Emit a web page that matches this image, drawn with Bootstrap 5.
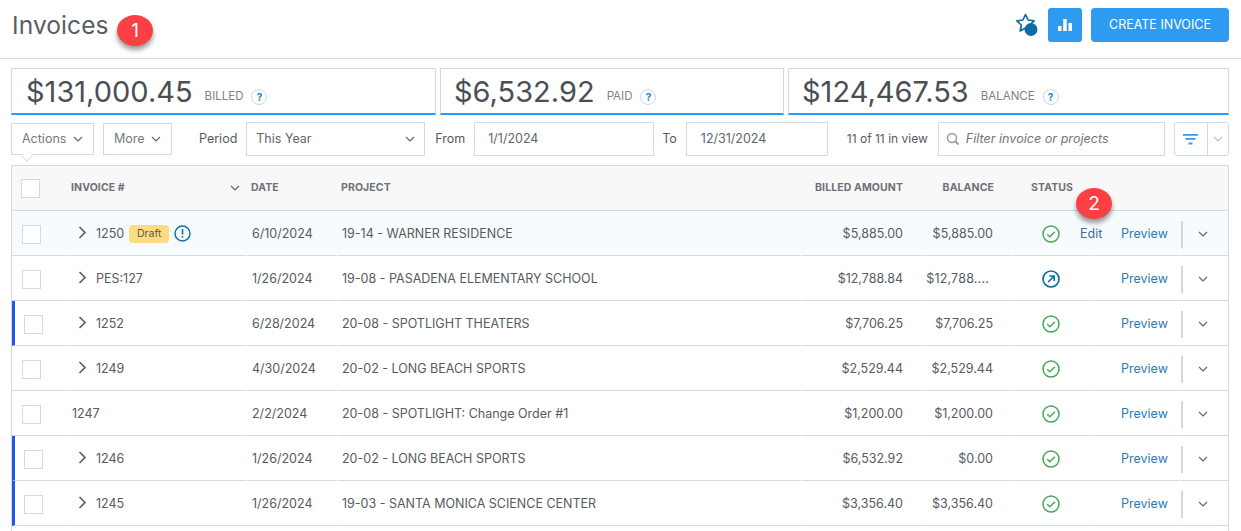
<!DOCTYPE html>
<html lang="en"><head><meta charset="utf-8"><title>Invoices</title>
<link href="https://cdn.jsdelivr.net/npm/bootstrap@5.3.0/dist/css/bootstrap.min.css" rel="stylesheet">
<style>
html,body{height:531px;overflow:hidden}
body{font-family:Inter,"Liberation Sans",sans-serif;color:#555b61;background:#fff;font-size:13px;position:relative}
.page-head{height:59px;border-bottom:1px solid #d3dae4;padding:0 12px}
.page-title{font-size:24.5px;font-weight:400;color:#585e66;margin:0;line-height:30px;padding-top:10px;letter-spacing:.1px}
.head-tools{margin-top:-9px}
.star-ic{margin-right:10px}
.icon-btn{width:34px;height:34px;background:#2e9bf0;border:0;border-radius:3px;padding:0}
.create-btn{width:138px;height:34px;background:#2e9bf0;border:0;border-radius:4px;color:#fff;font-size:12.5px;padding:1px 0 0;margin-left:9px}
.stats{padding:9px 12px 0 11px;gap:4px}
.stat{height:47px;border:1px solid #d3dae4;border-bottom:2px solid #2e9bf0;padding:0 0 0 13px}
.stat-a{width:425px;padding-left:14px}.stat-b{width:344px}.stat-c{width:441px}
.stat-num{font-size:29px;color:#4a4f55;line-height:46px}
.stat-lab{font-size:11.5px;color:#7d8288;margin-left:12px;margin-top:11px}
.qmark{width:16px;height:16px;border:1px solid #cfd8e2;border-radius:50%;color:#1f7fc2;font-size:10px;font-weight:700;margin-left:8px;margin-top:11px;line-height:14px;text-align:center}
.tools{padding:7px 12px 0 11px;height:41px}
.tbtn{height:32px;margin-top:1px;border:1px solid #d3dae4;background:#fff;color:#737a82;font-size:12.5px;padding:0 10px;position:relative}
.tbtn-a{width:83px}.tbtn-m{width:69px;margin-left:9px}
.tbtn-a::after{content:"";position:absolute;left:10px;bottom:-7px;width:10px;height:10px;background:#fff;border-right:1px solid #d3dae4;border-bottom:1px solid #d3dae4;transform:rotate(45deg) scale(.8,.8)}
.lbl{font-size:12.5px;color:#555b61;line-height:33px}
.lbl-p{margin-left:27px}.lbl-f{margin-left:10px}.lbl-t{margin-left:8px}
.fld{height:34px;border:1px solid #d3dae4;font-size:12.5px;color:#60666c;padding:0 9px}
.fld-p{width:179px;margin-left:9px}.fld-f{width:180px;margin-left:9px;padding-left:13px}.fld-t{width:142px;margin-left:9px;padding-left:14px}
.fld-s{width:227px;margin-left:10px;padding-left:7px;color:#70767c;font-style:italic;font-size:12.6px}
.srch{margin-right:6px}
.view-count{font-size:12px;margin-left:19px;line-height:34px}
.filt{width:55px;height:34px;margin-left:9px;border:1px solid #d3dae4;border-radius:3px}
.filt-l{width:34px;border-right:1px solid #d3dae4}
.filt-r{width:20px}
.table-wrap{padding:9px 12px 0 11px}
.inv{table-layout:fixed;width:1218px;border-collapse:separate;border-spacing:0;border-left:1px solid #d3dae4;border-right:1px solid #d3dae4;border-top:1px solid #d3dae4;margin:0}
.inv th{height:45px;background:#f8f8f8;border-bottom:1px solid #d3dae4;font-size:10.5px;font-weight:700;color:#6d7278;padding:0;vertical-align:middle;letter-spacing:.1px;white-space:nowrap}
.inv td{height:45px;border-bottom:1px solid #d3dae4;font-size:12.5px;color:#555b61;padding:2px 0 0;vertical-align:middle;background:#fff;white-space:nowrap}
.inv td+td{border-left:2px solid transparent}
.inv tr.cur td{background:#f6fbfe}
.inv tr.stub td{height:5px;padding:0;border-bottom:0;font-size:0;line-height:0}
.th-inv{padding-left:5px;padding-right:6px}
.pl5{padding-left:5px!important}.pl19{padding-left:19px!important}
.pr19{padding-right:19px!important;text-align:right}
.pr18{padding-right:18px!important;text-align:right}
.pl4{padding-left:4px!important}
.cell-st{padding-left:28px!important}
.cell-pv{padding-left:26px!important}
.cut-num{letter-spacing:.2px;margin-right:4px}
.cb{display:block;width:19px;height:19px;background:#fff;border:1px solid #d3dae4;margin-left:10px}
.th-cb{margin-left:9px}
tr.flag td.c0{border-left:3px solid #1f57f0}
tr.flag .cb{margin-left:9px}
.exp{display:inline-block;width:28px;padding-left:10px;line-height:0;vertical-align:2px}
.exp svg{margin:-4px 0}
.plain{padding-left:4px}
.draft{display:inline-block;background:#fddb82;border-radius:4px;font-size:10.5px;line-height:18px;height:18px;width:40px;text-align:center;color:#5c5a48;margin-left:5px;vertical-align:1px}
.warn{vertical-align:-4px;margin-left:5px}
.st-ic{vertical-align:middle}
a.act{color:#2b7cb4;text-decoration:none}
a.edit-link{color:#3d6f96;margin-left:20px;vertical-align:middle}
.dv{border-left:2px solid #cfd8e2;height:27px;display:block}
.row-car{margin-left:15px}
.pin{position:absolute;border-radius:50%;background:#fb4044;color:#fff;width:36px;height:31px;text-align:center;font-size:19px;line-height:31px;box-shadow:0 4px 5px rgba(0,0,0,.4);z-index:5}
.pin-1{left:117px;top:15px}.pin-2{left:1076px;top:188px}
</style></head><body>
<header class="page-head d-flex justify-content-between">
<h1 class="page-title">Invoices</h1>
<div class="head-tools d-flex align-items-center">
<svg class="star-ic" width="24" height="26" viewBox="0 0 24 26"><path d="M11.500 2.500l2.600 5.500 6 .8-4.400 4.200 1.100 6-5.300-2.900-5.300 2.900 1.100-6-4.400-4.200 6-.8z" fill="none" stroke="#0f6da3" stroke-width="1.700" stroke-linejoin="round"/><circle cx="17" cy="17.500" r="6.500" fill="#0f6da3"/></svg>
<button class="icon-btn d-flex align-items-center justify-content-center"><svg width="16" height="14" viewBox="0 0 16 14"><path d="M1 8h3.500v5H1zM6.200 1h3.500v12H6.200zM11.500 5H15v8h-3.500z" fill="#fff"/></svg></button>
<button class="create-btn">CREATE INVOICE</button>
</div>
</header>
<section class="stats d-flex">
<div class="stat stat-a d-flex"><span class="stat-num">$131,000.45</span><span class="stat-lab align-self-center">BILLED</span><span class="qmark align-self-center">?</span></div>
<div class="stat stat-b d-flex"><span class="stat-num">$6,532.92</span><span class="stat-lab align-self-center">PAID</span><span class="qmark align-self-center">?</span></div>
<div class="stat stat-c d-flex"><span class="stat-num">$124,467.53</span><span class="stat-lab align-self-center">BALANCE</span><span class="qmark align-self-center">?</span></div>
</section>
<section class="tools d-flex align-items-start">
<div class="tbtn tbtn-a d-flex align-items-center justify-content-between"><span>Actions</span><svg width="10" height="6" viewBox="0 0 10 6"><path d="M1 1l4 4 4-4" fill="none" stroke="#666" stroke-width="1.200"/></svg></div>
<div class="tbtn tbtn-m d-flex align-items-center justify-content-between"><span>More</span><svg width="10" height="6" viewBox="0 0 10 6"><path d="M1 1l4 4 4-4" fill="none" stroke="#666" stroke-width="1.200"/></svg></div>
<span class="lbl lbl-p">Period</span>
<div class="fld fld-p d-flex align-items-center justify-content-between"><span>This Year</span><svg width="10" height="6" viewBox="0 0 10 6"><path d="M1 1l4 4 4-4" fill="none" stroke="#666" stroke-width="1.200"/></svg></div>
<span class="lbl lbl-f">From</span>
<div class="fld fld-f d-flex align-items-center">1/1/2024</div>
<span class="lbl lbl-t">To</span>
<div class="fld fld-t d-flex align-items-center">12/31/2024</div>
<span class="view-count">11 of 11 in view</span>
<div class="fld fld-s d-flex align-items-center"><svg class="srch" width="14" height="14" viewBox="0 0 14 14"><circle cx="6" cy="6" r="4.500" fill="none" stroke="#9a9a9a" stroke-width="1.500"/><path d="M9.500 9.500l3 3" stroke="#9a9a9a" stroke-width="1.800"/></svg><span>Filter invoice or projects</span></div>
<div class="filt d-flex"><div class="filt-l d-flex align-items-center justify-content-center"><svg width="15" height="11" viewBox="0 0 15 11"><path d="M0 0h15v1.800H0zM2.500 4h10v1.800h-10zM5.500 8.500h4v2h-4z" fill="#2e9bf0"/></svg></div><div class="filt-r d-flex align-items-center justify-content-center"><svg width="10" height="6" viewBox="0 0 10 6"><path d="M1 1l4 4 4-4" fill="none" stroke="#bbc3cb" stroke-width="1.200"/></svg></div></div>
</section>
<main class="table-wrap">
<table class="inv"><colgroup><col style="width:54px"><col style="width:180px"><col style="width:90px"><col style="width:464px"><col style="width:122px"><col style="width:90px"><col style="width:81px"><col style="width:86px"><col></colgroup>
<thead><tr><th><span class="cb th-cb"></span></th><th><div class="th-inv d-flex justify-content-between align-items-center"><span>INVOICE #</span><svg width="10" height="6" viewBox="0 0 10 6"><path d="M1 1l4 4 4-4" fill="none" stroke="#666" stroke-width="1.200"/></svg></div></th><th class="pl5">DATE</th><th class="pl5">PROJECT</th><th class="pr19">BILLED AMOUNT</th><th class="pr18">BALANCE</th><th class="pl19">STATUS</th><th></th><th></th></tr></thead>
<tbody id="b"></tbody></table>
</main>
<div class="pin pin-1">1</div><div class="pin pin-2">2</div>
<script>
const rows=[["1250","6/10/2024","19-14 - WARNER RESIDENCE","$5,885.00","$5,885.00",1,0],["PES:127","1/26/2024","19-08 - PASADENA ELEMENTARY SCHOOL","$12,788.84","<span class='cut-num'>$12,788....</span>",1,0],["1252","6/28/2024","20-08 - SPOTLIGHT THEATERS","$7,706.25","$7,706.25",1,1],["1249","4/30/2024","20-02 - LONG BEACH SPORTS","$2,529.44","$2,529.44",1,0],["1247","2/2/2024","20-08 - SPOTLIGHT: Change Order #1","$1,200.00","$1,200.00",0,0],["1246","1/26/2024","20-02 - LONG BEACH SPORTS","$6,532.92","$0.00",1,1],["1245","1/26/2024","19-03 - SANTA MONICA SCIENCE CENTER","$3,356.40","$3,356.40",1,1]];
const chev='<span class="exp"><svg width="9" height="13" viewBox="0 0 9 13"><path d="M1.500 1l5.500 5.500L1.500 12" fill="none" stroke="#5a6068" stroke-width="1.700"/></svg></span>';
const ok='<svg class="st-ic" width="18" height="18" viewBox="0 0 18 18"><circle cx="9" cy="9" r="8" fill="none" stroke="#46a957" stroke-width="1.500"/><path d="M5.200 9.200l2.700 2.600 5-5" fill="none" stroke="#46a957" stroke-width="1.500"/></svg>';
const sent='<svg class="st-ic" width="18" height="18" viewBox="0 0 18 18"><circle cx="9" cy="9" r="8" fill="none" stroke="#0f6da3" stroke-width="1.700"/><path d="M6.200 12l5.500-5.500M7.200 6h5v5" fill="none" stroke="#0f6da3" stroke-width="1.700"/></svg>';
const warn='<svg class="warn" width="17" height="17" viewBox="0 0 17 17"><circle cx="8.500" cy="8.500" r="7.500" fill="none" stroke="#0f6da3" stroke-width="1.400"/><path d="M8.500 4v5.500M8.500 11v1.600" stroke="#0f6da3" stroke-width="1.600"/></svg>';
document.getElementById('b').innerHTML=rows.map((r,i)=>`<tr class="${i==0?'cur ':''}${r[6]?'flag':''}"><td class="c0"><span class="cb"></span></td><td>${r[5]?chev:'<span class="plain"></span>'}${r[0]}${i==0?'<span class="draft">Draft</span>'+warn:''}</td><td class="pl4">${r[1]}</td><td class="pl4">${r[2]}</td><td class="pr19">${r[3]}</td><td class="pr19">${r[4]}</td><td class="cell-st">${i==1?sent:ok}${i==0?'<a class="act edit-link" href="#">Edit</a>':''}</td><td class="cell-pv"><a class="act" href="#">Preview</a></td><td><div class="d-flex align-items-center"><span class="dv"></span><svg class="row-car" width="10" height="6" viewBox="0 0 10 6"><path d="M1 1l4 4 4-4" fill="none" stroke="#666" stroke-width="1.200"/></svg></div></td></tr>`).join('')+'<tr class="stub"><td></td><td></td><td></td><td></td><td></td><td></td><td></td><td></td><td></td></tr>';
</script>
<script src="https://cdn.jsdelivr.net/npm/bootstrap@5.3.0/dist/js/bootstrap.bundle.min.js"></script>
</body></html>
